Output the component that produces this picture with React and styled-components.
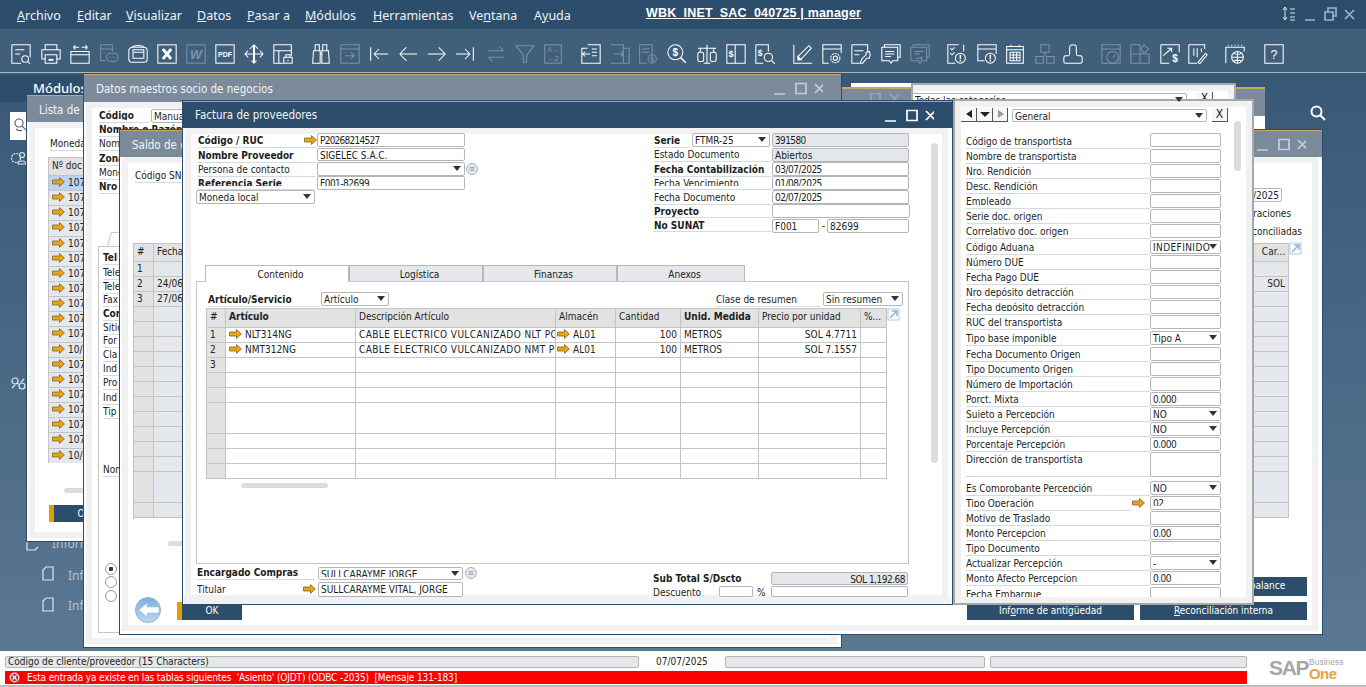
import React from 'react';
import styled, { createGlobalStyle, css } from 'styled-components';

const Global = createGlobalStyle`
  html,body{margin:0;padding:0;background:#fff;overflow:hidden;}
  #root{width:1366px;height:687px;}
`;
const FONT = `"DejaVu Sans Condensed","DejaVu Sans","Liberation Sans",sans-serif`;
const at = css`
  position:absolute;
  left:${p=>p.$x}px;top:${p=>p.$y}px;
  ${p=>p.$w!==undefined&&`width:${p.$w}px;`}
  ${p=>p.$h!==undefined&&`height:${p.$h}px;`}
`;
const clipped = css`
  ${p=>p.$clip&&`&::after{content:"";position:absolute;left:0;right:0;bottom:0;height:${p.$cut||3}px;background:#fff;}`}
`;
const Stage = styled.div`position:relative;width:1366px;height:687px;overflow:hidden;font-family:${FONT};font-size:10px;color:#222;background:#fff;`;
const MenuBar = styled.div`position:absolute;left:0;top:0;width:1366px;height:29px;background:#2d4d6d;`;
const MenuItem = styled.span`${at};top:7px;font:12.5px "Noto Sans",sans-serif;color:#eef2f6;white-space:nowrap;`;
const AppTitle = styled.span`position:absolute;left:646px;top:6px;font:bold 12.5px "Liberation Sans",sans-serif;letter-spacing:.18px;color:#fff;text-decoration:underline;white-space:nowrap;`;
const Toolbar = styled.div`position:absolute;left:0;top:29px;width:1366px;height:44px;background:#3f5f7b;border-bottom:1px solid #a9b8c6;box-sizing:border-box;`;
const ToolIcon = styled.svg`${at};width:20px;height:20px;fill:none;stroke:#fff;stroke-width:1.25;color:#fff;opacity:${p=>p.$dim?.32:1};`;
const WinBtnIcon = styled.svg`${at};width:14px;height:16px;fill:none;`;
const Desktop = styled.div`position:absolute;left:0;top:73px;width:1366px;height:578px;background:linear-gradient(180deg,#385877,#5a7892);`;
const ModHead = styled.div`position:absolute;left:0;top:75px;width:83px;height:27px;background:#2d4d6d;`;
const ModTitle = styled.span`position:absolute;left:33px;top:79px;font:500 13px "Noto Sans",sans-serif;color:#fff;`;
const Win = styled.div`${at};overflow:hidden;background:#fff;box-sizing:border-box;border:1px solid #2d4d6d;${p=>p.$plain&&`border-color:#a8a8a8;border-width:2px;`}`;
const Layer = styled.div`position:absolute;left:${p=>-p.$x}px;top:${p=>-p.$y}px;width:1366px;height:687px;`;
const Band = styled.div`${at};box-sizing:border-box;border:6px solid #f1f1f1;`;
const TitleBar = styled.div`${at};box-sizing:border-box;background:${p=>p.$active?'#2d4d6d':'#7b8b9b'};border-top:2px solid ${p=>p.$active?'#e09f00':'#c9a859'};`;
const TitleText = styled.span`${at};font:11.5px "DejaVu Sans Condensed","DejaVu Sans",sans-serif;color:#f2f4f6;white-space:nowrap;`;
const Ctl = styled.svg`${at};width:${p=>p.$cw||50}px;height:14px;fill:none;stroke:${p=>p.$c||'#fff'};stroke-width:1.7;`;
const Lbl = styled.div`${at};box-sizing:border-box;height:${p=>p.$h||15}px;line-height:15px;overflow:hidden;white-space:nowrap;font-weight:${p=>p.$b?'bold':'normal'};color:#1d1d1d;border-bottom:${p=>p.$line===false?'none':'1px solid #d3dae0'};${clipped}`;
const Field = styled.div`${at};box-sizing:border-box;height:${p=>p.$h||14}px;border:1px solid #b5b5b5;border-radius:2px;line-height:13px;padding:0 2px;overflow:hidden;white-space:nowrap;letter-spacing:${p=>p.$ls||0}px;text-align:${p=>p.$right?'right':'left'};background:${p=>p.$gray?'#e4e8ec':'#fff'};color:#1d1d1d;${clipped}`;
const Caret = styled.i`position:absolute;right:3px;top:3px;width:0;height:0;border-left:4px solid transparent;border-right:4px solid transparent;border-top:5px solid #333;z-index:1;`;
const TabBtn = styled.div`${at};box-sizing:border-box;height:17px;top:265px;text-align:center;line-height:17px;padding-left:7px;font-size:10px;border:1px solid #b8b8b8;background:${p=>p.$on?'#fff':'#e4e8ec'};${p=>p.$on&&'border-bottom:none;z-index:2;'}`;
const Panel = styled.div`${at};box-sizing:border-box;border:1px solid #c6c6c6;background:#fff;`;
const Scroll = styled.div`${at};background:#dcdcdc;border-radius:4px;`;
const Grid = styled.div`${at};display:grid;grid-template-columns:${p=>p.$cols};grid-template-rows:${p=>p.$rows};overflow:hidden;box-sizing:border-box;border-left:1px solid #c4c4c4;border-top:1px solid #c4c4c4;`;
const Cell = styled.div`position:relative;box-sizing:border-box;border-right:1px solid #c4c4c4;border-bottom:1px solid #c4c4c4;line-height:14px;padding:0 3px;white-space:nowrap;overflow:hidden;text-align:${p=>p.$right?'right':'left'};
  font-weight:${p=>p.$b?'bold':'normal'};
  letter-spacing:${p=>p.$ls||0}px;
  background:${p=>p.$bg||'#fff'};
  ${p=>p.$hi&&'line-height:16px;'}
`;
const ArrowSvg = styled.svg`${at};width:13px;height:10px;`;
const CellArrow = styled.svg`width:13px;height:10px;vertical-align:-1px;margin-right:3px;margin-left:${p=>p.$ml||0}px;`;
const DarkBtn = styled.div`${at};background:#2d4d6d;color:#fff;text-align:center;font-size:10px;line-height:17px;white-space:nowrap;`;
const GoldTab = styled.div`${at};background:#e09f00;`;
const Radio = styled.div`${at};width:12px;height:12px;box-sizing:border-box;border:1px solid #999;border-radius:50%;background:${p=>p.$on?'radial-gradient(circle,#333 0 2px,#fff 2.5px)':'#fff'};`;
const SideText = styled.span`${at};font:12px "Noto Sans",sans-serif;color:#b6c5d2;white-space:nowrap;`;
const SideIcon = styled.svg`${at};fill:none;stroke:${p=>p.$c||'#dfe6ec'};stroke-width:1.2;`;
const WhiteBox = styled.div`${at};background:#fff;`;
const Status = styled.div`position:absolute;left:0;top:651px;width:1366px;height:36px;background:#fff;border-bottom:2px solid #bdbdbd;box-sizing:border-box;`;
const StatusField = styled.div`${at};box-sizing:border-box;height:12px;top:656px;line-height:10px;font-size:10px;padding-left:2px;background:#e4e8ec;border:1px solid #b5b5b5;border-radius:2px;white-space:nowrap;overflow:hidden;`;
const StatusDate = styled.span`position:absolute;left:656px;top:656px;font-size:10px;line-height:12px;`;
const ErrorBar = styled.div`position:absolute;left:5px;top:671px;width:1242px;height:13px;background:#ff0000;color:#fff;font-size:10px;line-height:13px;padding-left:22px;box-sizing:border-box;white-space:pre;letter-spacing:-.12px;`;
const ErrIcon = styled.svg`position:absolute;left:4px;top:1px;width:11px;height:11px;`;
const LogoSap = styled.span`position:absolute;left:1269px;top:656px;font:bold 21px "Liberation Sans",sans-serif;letter-spacing:-1.3px;color:#a6a6a6;`;
const LogoBiz = styled.span`position:absolute;left:1309px;top:657px;font:8.5px "Liberation Sans",sans-serif;color:#a6a6a6;`;
const LogoOne = styled.span`position:absolute;left:1309px;top:665px;font:bold 15px "Liberation Sans",sans-serif;letter-spacing:-.6px;color:#e8a33d;`;
const PlainBtn = styled.div`${at};box-sizing:border-box;height:14px;background:#f6f6f6;border-right:1px solid #555;border-bottom:1px solid #555;text-align:center;line-height:12px;font-size:12px;color:#222;`;
const Tri = styled.i`position:absolute;top:2px;left:${p=>p.$l}px;width:0;height:0;border-top:4.5px solid transparent;border-bottom:4.5px solid transparent;${p=>p.$dir==='l'?`border-right:6px solid #222;`:`border-left:6px solid #999;`}`;
const TriDown = styled.i`position:absolute;top:4px;left:3px;width:0;height:0;border-left:5px solid transparent;border-right:5px solid transparent;border-top:5px solid #222;`;
const Glob = styled.svg`${at};width:12px;height:12px;fill:#e4e8ec;stroke:#a8b4c0;`;
const Expand = styled.svg`${at};width:13px;height:13px;fill:none;stroke:#8fb1d8;`;
const Back = styled.svg`${at};width:28px;height:26px;`;
const Search = styled.svg`${at};fill:none;stroke:#fff;stroke-width:2;`;
const Corner = styled.div`${at};box-sizing:border-box;border-left:1px solid #c6c6c6;border-top:1px solid #c6c6c6;transform:skewX(-15deg);`;
const RightText = styled.span`float:right;`;
const Offset = styled.span`margin-left:${p=>p.$ml}px;`;

const Arrow = p => <ArrowSvg {...p} viewBox="0 0 13 10"><path d="M.5 3h7V.6L12.4 5 7.5 9.4V7h-7z" fill="#eaa416" stroke="#7d6526" strokeWidth=".8"/></ArrowSvg>;
const InArrow = p => <CellArrow {...p} viewBox="0 0 13 10"><path d="M.5 3h7V.6L12.4 5 7.5 9.4V7h-7z" fill="#eaa416" stroke="#7d6526" strokeWidth=".8"/></CellArrow>;
const Glyph = ({x=12,y=15,s=8,b=true,i,f='Liberation Sans',children})=><text x={x} y={y} fontSize={s} fontWeight={b?'bold':'normal'} fontStyle={i?'italic':'normal'} fill="#fff" stroke="none" textAnchor="middle" fontFamily={f}>{children}</text>;

const icons = {
 docSearch:<><path d="M1 1h22v15M1 1v22h11M5 7h11M5 12h6"/><circle cx="17" cy="18" r="4"/><path d="M20 21l3 3"/></>,
 printer:<><path d="M5 7V1h14v6M5 18H1V7h22v11h-4"/><path d="M5 13h14v10H5z"/><path d="M9 19h6" strokeWidth="2.2"/></>,
 transfer:<><path d="M1 9h22v14H1zM1 13h22M4 4h7M4 4l2.500-2.500M4 4l2.500 2.500M14 4h7M21 4l-2.500-2.500M21 4l-2.500 2.500"/></>,
 chat:<><path d="M2 1h14v8M2 1v19h6M2 6h14"/><rect x="9" y="11" width="14" height="10" rx="5"/><path d="M12.500 16h1M15.500 16h1M18.500 16h1" strokeWidth="1.6"/></>,
 winbox:<><path d="M5 4C6 1 18 1 19 4"/><rect x="1" y="4" width="22" height="18" rx="4"/><path d="M6 7h13v10H6zM6 10h13"/></>,
 excel:<><rect x="1" y="1" width="22" height="22"/><path d="M7 6l10 12M17 6L7 18" strokeWidth="3.4"/></>,
 word:<><rect x="1" y="1" width="22" height="22"/><Glyph y={18} s={15} i f="Liberation Sans">W</Glyph></>,
 pdf:<><rect x="1" y="1" width="22" height="22"/><Glyph y={15} s={8.500}>PDF</Glyph></>,
 move:<><path d="M12 1v22" strokeWidth="2.500"/><path d="M1 12h22M12 1L7 6M12 1l5 5M12 23l-3-3M12 23l3-3M1 12l4-4M1 12l4 4M23 12l-4-4M23 12l-4 4"/></>,
 lock:<><path d="M1 1h21v7H1zM1 8v15h6V8M7 23h5M22 8v6"/><rect x="13" y="16" width="10" height="7"/><path d="M15.500 16v-3h5v3"/><path d="M18 19v1.500" strokeWidth="1.600"/></>,
 bino:<><path d="M5 1h5v7H5zM14 1h5v7h-5zM3 8h8v15H2zM13 8h8l1 15h-9zM11 12h2"/></>,
 inbox:<><path d="M1 1h22v22H1zM1 6h22M6 14h11M13 10l4 4-4 4"/></>,
 first:<path d="M2 4v16M23 12H6M6 12l6-6M6 12l6 6"/>,
 prev:<path d="M23 12H2M2 12l8-8M2 12l8 8"/>,
 next:<path d="M1 12h21M22 12l-8-8M22 12l-8 8"/>,
 last:<path d="M22 4v16M1 12h17M18 12l-6-6M18 12l-6 6"/>,
 swap:<path d="M3 8h18M21 8l-5-5M21 16H3M3 16l5 5"/>,
 funnel:<path d="M1 2h22l-9 11v9h-4v-9z"/>,
 az:<><rect x="2" y="1" width="20" height="22"/><Glyph y={10} s={8} b={false}>A→</Glyph><Glyph y={20} s={8} b={false}>←Z</Glyph></>,
 docOut:<><path d="M8 1h15v22H8M1 5h7M1 5v18h7M13 6h6M13 10h6M13 14h6M2 12h9M2 12l3-3M2 12l3 3"/></>,
 docIn:<><path d="M1 1h15v22H1M16 5h7v18h-7M5 12h11M16 12l-3-3M16 12l-3 3"/></>,
 cash:<><path d="M2 1h15v15M2 1v22h9M5 6h9M5 10h9"/><circle cx="17" cy="18" r="5"/><Glyph x={17} y={21} s={8}>$</Glyph></>,
 dollarSearch:<><circle cx="10" cy="10" r="9"/><Glyph x={10} y={14.500} s={12}>$</Glyph><path d="M16.500 16.500l6 6" strokeWidth="2"/></>,
 scale:<><path d="M12 1v4M1 5h22M4 5v5M20 5v5"/><rect x="1" y="10" width="7" height="11" rx="2"/><rect x="16" y="10" width="7" height="11" rx="2"/><path d="M12 5v18M8 23h8"/></>,
 dollarCol:<><path d="M1 1h22v22H1zM11 1v22"/><Glyph x={6} y={16} s={11}>$</Glyph></>,
 dollarDoc:<><path d="M1 1h15v8M1 1v22h9M16 1h-2"/><Glyph x={6} y={14} s={10}>$</Glyph><circle cx="16" cy="16" r="5"/><path d="M20 20l4 4"/></>,
 pencil:<><path d="M1 1v22h22"/><path d="M6 19v-4L19 2l3 3L9 19z"/><path d="M6 19v-4l4 4z" fill="#fff"/></>,
 gear:<><path d="M1 1h22v5H1zM1 6v17h7M23 6v5"/><circle cx="16" cy="17" r="5.500" strokeDasharray="2.500 1"/><circle cx="16" cy="17" r="2.500"/></>,
 docTool:<><path d="M1 1h19v9M1 1v22h9M4 8h11M4 13h6"/><path d="M22 9l-4 1v3l-5 5-2 5h3l5-6h3l1-4z"/></>,
 comment:<><path d="M4 4V1h19v15h-3M1 4h19v16h-6l-2 3-2-3H1zM5 9h11M5 12h11M5 15h7" /></>,
 commentIn:<><path d="M4 4V1h19v15h-3M1 4h19v16h-6l-2 3-2-3H1zM5 9h11M5 12h7M7 17h8M15 17l-2-2M15 17l-2 2"/></>,
 checkAlert:<><path d="M14 1H1v22h9M20 1v8M4 5l2 2 3-3M4 11l2 2 3-3"/><circle cx="16" cy="17" r="6"/><path d="M16 13v5M16 19v2" strokeWidth="1.800"/></>,
 winAlert:<><path d="M1 1h22v5H1zM1 6v14h8M23 6v6"/><circle cx="16" cy="17" r="6"/><path d="M16 13v5M16 19v2" strokeWidth="1.800"/></>,
 calc:<><path d="M2 3h20v20H2zM7 1v3M17 1v3M2 7h20"/><path d="M6 10h12v10H6zM6 13.300h12M6 16.600h12M10 10v10M14 10v10"/></>,
 hier:<><path d="M7 1h10v9H7zM1 15h9v8H1zM14 15h9v8h-9zM12 10v5"/></>,
 user:<><path d="M8 10V4c0-4 8-4 8 0v6c0 3 0 4 2 4h3c2 0 2 2 2 3v4c0 1-1 2-2 2H3c-1 0-2-1-2-2v-4c0-1 0-3 2-3h3c2 0 2-1 2-4z"/></>,
 clockWin:<><path d="M1 1h22v22H1zM1 6h22"/><circle cx="14" cy="16" r="7"/><path d="M14 16l3-3"/></>,
 blocks:<><path d="M1 1h11v11H1zM1 12h11v11H1zM12 12h11v11H12z"/><path d="M17 1l5 5-5 5-4-5z"/></>,
 growth:<><path d="M1 1h22v9M1 1v22h10M4 14l9-8M9 5h5v5"/><Glyph x={18} y={22} s={12}>$</Glyph></>,
 chartPen:<><path d="M1 1h19v5M1 1v22h10M7 5v9M11 5v11M16 5v5M12 22l9-11 2 2-9 11z"/></>,
 calGlobe:<><path d="M1 23V4h22v5M4 1v1M8 1v1M12 1v1M16 1v1M20 1v1"/><circle cx="15" cy="16" r="7"/><path d="M8 16h14M15 9v14M10 11c3 2 7 2 10 0M10 21c3-2 7-2 10 0"/></>,
 help:<><path d="M1 1h22v22H1z"/><Glyph y={18} s={15} b={false}>?</Glyph></>,
};
const toolbar = [[11,'docSearch'],[41,'printer'],[70,'transfer'],[99,'chat',1],[128,'winbox'],[157,'excel'],[186,'word',1],[215,'pdf'],[244,'move'],[273,'lock'],[311,'bino'],[340,'inbox',1],[369,'first'],[398,'prev'],[427,'next'],[455,'last'],[486,'swap',1],[515,'funnel',1],[543,'az',1],[581,'docOut'],[610,'docIn',1],[638,'cash',1],[667,'dollarSearch'],[697,'scale'],[726,'dollarCol'],[755,'dollarDoc'],[793,'pencil'],[822,'gear'],[851,'docTool'],[881,'comment'],[910,'commentIn',1],[947,'checkAlert'],[977,'winAlert'],[1005,'calc'],[1035,'hier',1],[1063,'user'],[1101,'clockWin',1],[1130,'blocks',1],[1160,'growth'],[1188,'chartPen'],[1225,'calGlobe'],[1264,'help']];
const menu = [[17,'A','rchivo'],[77,'E','ditar'],[126,'V','isualizar'],[197,'D','atos'],[247,'P','asar a'],[305,'M','ódulos'],[373,'H','erramientas']];

const Controls = ({x,y,c}) => <Ctl $x={x} $y={y} $c={c} viewBox="0 0 50 14"><path d="M1 12h11M23 1.500h10v10H23zM42 2l9 9M51 2l-9 9"/></Ctl>;
const Window = ({x,y,w,h,title,titleH=28,active,textY,ctlX,children}) => (
  <Win $x={x} $y={y} $w={w} $h={h}>
    <Layer $x={x+1} $y={y+1}>
      <Band $x={x+3} $y={y+titleH} $w={w-8} $h={h-titleH-4}/>
      {children}
      <TitleBar $x={x+1} $y={y} $w={w-2} $h={titleH} $active={active}/>
      <TitleText $x={x+13} $y={y+(textY||9)}>{title}</TitleText>
      {ctlX && <Controls x={ctlX} y={y+9} c={active?'#fff':'#c4ced8'}/>}
    </Layer>
  </Win>
);

const Select = ({children,...p}) => <Field {...p}>{children}<Caret/></Field>;

const genRows = [
 ['Código de transportista',133,'',0,0,0,0,1],['Nombre de transportista',149],['Nro. Rendición',164],['Desc. Rendición',179],['Empleado',194,'',1],['Serie doc. origen',209],['Correlativo doc. origen',224],['Código Aduana',240,'INDEFINIDO',0,1],['Número DUE',255],['Fecha Pago DUE',270],['Nro depósito detracción',285],['Fecha depósito detracción',300,'',1],['RUC del transportista',315],['Tipo base imponible',331,'Tipo A',0,1],['Fecha Documento Origen',347],['Tipo Documento Origen',362],['Número de Importación',377],['Porct. Mixta',392,'0.000'],['Sujeto a Percepción',407,'NO',1,1],['Incluye Percepción',422,'NO',0,1],['Porcentaje Percepción',437,'0.000'],['Dirección de transportista',452,'',0,0,25],['Es Comprobante Percepción',481,'NO',1,1],['Tipo Operación',496,'02',1,0,0,1],['Motivo de Traslado',511],['Monto Percepcion',526,'0.00'],['Tipo Documento',541],['Actualizar Percepción',556,'-',0,1],['Monto Afecto Percepcion',571,'0.00'],['Fecha Embarque',587,'',1,0,11],
];
const cols = '19px 130px 200px 60px 65px 78px 102px 26px';
const gridHead = ['#','Artículo','Descripción Artículo','Almacén','Cantidad','Unid. Medida','Precio por unidad','%...'];
const blank = n => Array.from({length:n},(_,i)=>i);

export default function App(){
  return (
  <Stage>
    <Global/>
    <MenuBar>
      {menu.map(([x,u,r])=><MenuItem key={x} $x={x}><u>{u}</u>{r}</MenuItem>)}
      <MenuItem $x={469}>Ve<u>n</u>tana</MenuItem>
      <MenuItem $x={534}>A<u>y</u>uda</MenuItem>
      <AppTitle>WBK_INET_SAC_040725 | manager</AppTitle>
      <WinBtnIcon $x={1282} $y={6} viewBox="0 0 14 16"><path d="M3 1v13M3 1L1 4M3 1l2 3M3 14l-2-3M3 14l2-3M8 3h5M8 7h5M8 11h5M8 14h5" stroke="#dfe6ec"/></WinBtnIcon>
      <Ctl $cw={54} $x={1304} $y={7} $c="#9db0c2" viewBox="0 0 54 14"><path d="M1 13h10M21 5h8v8h-8zM24 5V1h8v8h-3M41 3l9 9M50 3l-9 9"/></Ctl>
    </MenuBar>
    <Toolbar>
      {toolbar.map(([x,n,d])=><ToolIcon key={x} $x={x} $y={15} $dim={d} viewBox="0 0 24 24">{icons[n]}</ToolIcon>)}
    </Toolbar>
    <Desktop/>
    <ModHead/><ModTitle>Módulos</ModTitle>
    <SideIcon $x={10} $y={150} width="17" height="16" viewBox="0 0 17 16"><circle cx="6" cy="8" r="4.500" strokeDasharray="2 1"/><circle cx="12" cy="5" r="2.500"/><path d="M8 14c0-4 8-4 8 0z"/></SideIcon>
    <SideIcon $x={10} $y={375} width="17" height="17" viewBox="0 0 17 17"><circle cx="5" cy="6" r="3"/><circle cx="12" cy="11" r="3"/><path d="M7 8l3 2M2 13l3-3M14 4l-3 3"/></SideIcon>
    <SideText $x={52} $y={535}>Inform</SideText>
    <SideIcon $x={26} $y={537} width="14" height="14" viewBox="0 0 14 14"><path d="M1 1v12h8l3-3"/></SideIcon>
    <SideIcon $x={42} $y={566} width="12" height="15" viewBox="0 0 12 15"><path d="M4 1h7v13H1V4z"/></SideIcon>
    <SideIcon $x={42} $y={597} width="12" height="15" viewBox="0 0 12 15"><path d="M4 1h7v13H1V4z"/></SideIcon>
    <SideText $x={68} $y={567}>Inf</SideText>
    <SideText $x={68} $y={597}>Inf</SideText>
    <WhiteBox $x={10} $y={112} $w={16} $h={28}/>
    <SideIcon $c="#666" $x={13} $y={117} width="13" height="16" viewBox="0 0 13 16"><circle cx="6" cy="6" r="4"/><path d="M9 9l4 4M3 12c2 2 5 2 6 1"/></SideIcon>

    {/* Lista de window */}
    <Window x={26} y={94} w={200} h={448} title="Lista de" >
      <Lbl $x={50} $y={136} $w={33}>Moneda</Lbl>
      <Grid $x={48} $y={157} $w={100} $h={306} $cols="100px" $rows="18px repeat(19,15.15px)">
        <Cell $bg="#e2e2e2" $hi>Nº doc</Cell>
        {blank(19).map(i=><Cell key={i} $bg={i===0?'#b9d5f3':'#e4e8ec'}><InArrow/>{i===11||i===18?'10/4':'107'}</Cell>)}
      </Grid>
      <Scroll $x={64} $y={488} $w={40} $h={5}/>
      <GoldTab $x={49} $y={505} $w={6} $h={17}/>
      <DarkBtn $x={54} $y={505} $w={60} $h={17}>OK</DarkBtn>
    </Window>

    {/* behind right title */}
    <TitleBar $x={842} $y={87} $w={423} $h={29}/>
    <WhiteBox $x={1235} $y={116} $w={30} $h={20}/>
    <WhiteBox $x={851} $y={83} $w={60} $h={4}/>
    <Ctl $x={866} $y={92} $c="#96a5b4" viewBox="0 0 50 14"><path d="M5 1.500h9v10H5zM24 2l9 9M33 2l-9 9"/></Ctl>
    <Win $plain $x={911} $y={83} $w={325} $h={60}>
      <Layer $x={913} $y={85}>
        <Band $x={913} $y={85} $w={321} $h={60}/>
        <Select $x={912} $y={93} $w={275} $h={12}>Todas las categorías</Select>
        <PlainBtn $x={1197} $y={92} $w={16}>X</PlainBtn>
      </Layer>
    </Win>

    {/* Datos maestros */}
    <Window x={83} y={73} w={759} h={575} title="Datos maestros socio de negocios" titleH={29} ctlX={773}>
      <Lbl $b $x={99} $y={108} $w={50} $clip $cut={2}>Código</Lbl>
      <Field $x={151} $y={109} $w={60}>Manual</Field>
      {[['Nombre o Razón',122,1],['Nombre',136],['Zona',151,1],['Moneda',165],['Nro',179,1]].map(([t,y,b])=><Lbl key={y} $x={99} $y={y} $w={84} $b={b}>{t}</Lbl>)}
      <Corner $x={109} $y={232} $w={20} $h={14}/>
      <Panel $x={98} $y={246} $w={100} $h={387}/>
      {[['Tel',250,1],['Tele',265],['Tele',279],['Fax',292],['Cor',306,1],['Sitio',320],['For',333],['Cla',347],['Ind',361],['Pro',375],['Ind',390],['Tip',404]].map(([t,y,b])=><Lbl key={y} $x={103} $y={y} $w={30} $b={b}>{t}</Lbl>)}
      <Lbl $x={103} $y={462} $w={30}>Nombre</Lbl>
      <Radio $x={105} $y={563} $on/><Radio $x={105} $y={576}/><Radio $x={105} $y={590}/>
    </Window>

    {/* Saldo */}
    <Window x={119} y={129} w={1204} h={506} title="Saldo de cuenta" ctlX={1256}>
      <Lbl $x={135} $y={168} $w={60}>Código SN</Lbl>
      <Grid $x={133} $y={243} $w={60} $h={276} $cols="20px 40px" $rows="18px repeat(14,15px) 31px 15px">
        <Cell $bg="#e2e2e2" $hi>#</Cell><Cell $bg="#e2e2e2" $hi>Fecha</Cell>
        <Cell $bg="#e2e2e2">1</Cell><Cell $bg="#e4e8ec"/>
        <Cell $bg="#e2e2e2">2</Cell><Cell $bg="#e4e8ec">24/06/2025</Cell>
        <Cell $bg="#e2e2e2">3</Cell><Cell $bg="#e4e8ec">27/06/2025</Cell>
        {blank(13).map(i=><React.Fragment key={i}><Cell $bg="#e2e2e2"/><Cell $bg="#e4e8ec"/></React.Fragment>)}
      </Grid>
      <Scroll $x={168} $y={541} $w={30} $h={5}/>
      <Back $x={134} $y={597} viewBox="0 0 28 26">
        <defs><linearGradient id="bk" x1="0" y1="0" x2="0" y2="1"><stop offset="0" stopColor="#7eb0dc"/><stop offset="1" stopColor="#bcd6ee"/></linearGradient></defs>
        <circle cx="14" cy="13" r="12.500" fill="url(#bk)" stroke="#8eb2d4"/>
        <path d="M5 13l8-7v4h12v6H13v4z" fill="#fff" stroke="#9bbcdc" strokeWidth=".6"/>
      </Back>
      <GoldTab $x={177} $y={602} $w={6} $h={18}/>
      <DarkBtn $x={182} $y={602} $w={60} $h={18}>OK</DarkBtn>
      <Field $x={1240} $y={188} $w={42}><RightText>/2025</RightText></Field>
      <Lbl $x={1253} $y={206} $w={50} $line={false}>raciones</Lbl>
      <Lbl $x={1252} $y={224} $w={55} $line={false}>conciliadas</Lbl>
      <Grid $x={1240} $y={243} $w={49} $h={276} $cols="48px" $rows="18px repeat(14,15px) 31px 15px">
        <Cell $bg="#e2e2e2" $right $hi>Car...</Cell>
        {blank(16).map(i=><Cell key={i} $bg="#e4e8ec" $right>{i===1?'SOL':''}</Cell>)}
      </Grid>
      <Expand $x={1289} $y={242} viewBox="0 0 13 13"><path d="M1 1h11v11H1z" strokeWidth=".7"/><path d="M3 10l7-7M5 3h5v5" strokeWidth="1.500"/></Expand>
      <DarkBtn $x={1140} $y={577} $w={167} $h={19}><Offset $ml={18}>Vista previa de balance</Offset></DarkBtn>
      <DarkBtn $x={967} $y={602} $w={167} $h={18}>Inf<u>o</u>rme de antigüedad</DarkBtn>
      <DarkBtn $x={1140} $y={602} $w={167} $h={18}><u>R</u>econciliación interna</DarkBtn>
    </Window>

    {/* Factura */}
    <Window x={182} y={100} w={771} h={505} title="Factura de proveedores" active textY={8} ctlX={884}>
      <Lbl $b $x={198} $y={133} $w={118}>Código / RUC</Lbl>
      <Arrow $x={304} $y={135}/>
      <Field $ls={-.75} $x={317} $y={133} $w={148}>P20268214527</Field>
      <Lbl $b $x={198} $y={148} $w={118}>Nombre Proveedor</Lbl>
      <Field $x={317} $y={148} $w={148} $h={13}>SIGELEC S.A.C.</Field>
      <Lbl $clip $cut={2} $x={198} $y={162} $w={118}>Persona de contacto</Lbl>
      <Select $x={317} $y={162} $w={148}/>
      <Glob $x={466} $y={163} viewBox="0 0 12 12"><circle cx="6" cy="6" r="5.500"/><path d="M3.500 4.800h5M3.500 7.200h5" stroke="#8a96a2"/></Glob>
      <Lbl $b $clip $x={198} $y={176} $w={118} $h={14}>Referencia Serie</Lbl>
      <Field $clip $ls={-.5} $x={317} $y={176} $w={148}>F001-82699</Field>
      <Select $x={196} $y={190} $w={119}>Moneda local</Select>

      <Lbl $b $x={654} $y={133} $w={36}>Serie</Lbl>
      <Select $x={692} $y={133} $w={78}>FTMR-25</Select>
      <Field $ls={-.6} $gray $x={772} $y={133} $w={137}>391580</Field>
      <Lbl $x={654} $y={147} $w={117}>Estado Documento</Lbl>
      <Field $gray $x={772} $y={148} $w={137}>Abiertos</Field>
      <Lbl $b $x={654} $y={162} $w={117}>Fecha Contabilización</Lbl>
      <Field $ls={-.5} $x={772} $y={162} $w={137}>03/07/2025</Field>
      <Lbl $clip $x={654} $y={176} $w={117} $h={14}>Fecha Vencimiento</Lbl>
      <Field $clip $ls={-.5} $x={772} $y={176} $w={137}>01/08/2025</Field>
      <Lbl $x={654} $y={190} $w={117} >Fecha Documento</Lbl>
      <Field $ls={-.5} $x={772} $y={190} $w={137}>02/07/2025</Field>
      <Lbl $b $x={654} $y={204} $w={117} $h={14}>Proyecto</Lbl>
      <Field $x={772} $y={204} $w={138}/>
      <Lbl $b $x={654} $y={218} $w={117} $h={14}>No SUNAT</Lbl>
      <Field $x={772} $y={219} $w={47}>F001</Field>
      <Lbl $x={822} $y={218} $w={5} $line={false}>-</Lbl>
      <Field $x={827} $y={219} $w={82}>82699</Field>

      <TabBtn $on $x={205} $w={144}>Contenido</TabBtn>
      <TabBtn $x={349} $w={134}>Logística</TabBtn>
      <TabBtn $x={483} $w={134}>Finanzas</TabBtn>
      <TabBtn $x={617} $w={128}>Anexos</TabBtn>
      <Panel $x={196} $y={281} $w={713} $h={283}/>
      <Lbl $b $x={208} $y={292} $w={112}>Artículo/Servicio</Lbl>
      <Select $x={321} $y={292} $w={68}>Artículo</Select>
      <Lbl $x={716} $y={292} $w={105}>Clase de resumen</Lbl>
      <Select $x={823} $y={292} $w={80}>Sin resumen</Select>
      <Grid $x={206} $y={308} $w={681} $h={171} $cols={cols} $rows="19px repeat(5,15px) 31px repeat(3,15px)">
        {gridHead.map((t,i)=><Cell key={t} $bg="#e2e2e2" $hi $b={i===1||i===5}>{t}</Cell>)}
        <Cell $bg="#e2e2e2">1</Cell><Cell><InArrow/>NLT314NG</Cell><Cell $ls={.4}>CABLE ELECTRICO VULCANIZADO NLT POLIETILENO</Cell><Cell><InArrow $ml={-2}/>AL01</Cell><Cell $right>100</Cell><Cell>METROS</Cell><Cell $right>SOL 4.7711</Cell><Cell/>
        <Cell $bg="#e2e2e2">2</Cell><Cell><InArrow/>NMT312NG</Cell><Cell $ls={.4}>CABLE ELECTRICO VULCANIZADO NMT POLIETILENO</Cell><Cell><InArrow $ml={-2}/>AL01</Cell><Cell $right>100</Cell><Cell>METROS</Cell><Cell $right>SOL 7.1557</Cell><Cell/>
        <Cell $bg="#e2e2e2">3</Cell>{blank(7).map(i=><Cell key={i}/>)}
        {blank(6).flatMap(r=>[<Cell key={r+'a'} $bg="#e2e2e2"/>,...blank(7).map(i=><Cell key={r+'-'+i}/>)])}
      </Grid>
      <Expand $x={887} $y={308} viewBox="0 0 13 13"><path d="M1 1h11v11H1z" strokeWidth=".7"/><path d="M3 10l7-7M5 3h5v5" strokeWidth="1.500"/></Expand>
      <Scroll $x={241} $y={483} $w={87} $h={5}/>
      <Scroll $x={931} $y={143} $w={7} $h={320}/>

      <Lbl $b $x={197} $y={565} $w={118}>Encargado Compras</Lbl>
      <Select $clip $cut={2} $x={318} $y={567} $w={145} $h={13}>SULLCARAYME JORGE</Select>
      <Glob $x={465} $y={567} viewBox="0 0 12 12"><circle cx="6" cy="6" r="5.500"/><path d="M3.500 4.800h5M3.500 7.200h5" stroke="#8a96a2"/></Glob>
      <Lbl $x={197} $y={582} $w={100} $line={false}>Titular</Lbl>
      <Arrow $x={303} $y={584}/>
      <Field $x={318} $y={582} $w={145} $h={15}>SULLCARAYME  VITAL, JORGE</Field>
      <Lbl $b $x={653} $y={571} $w={115} $line={false}>Sub Total S/Dscto</Lbl>
      <Field $ls={-.5} $gray $right $x={771} $y={572} $w={137} $h={13}>SOL 1,192.68</Field>
      <Lbl $x={653} $y={585} $w={60} $h={12} $line={false}>Descuento</Lbl>
      <Field $x={719} $y={586} $w={34} $h={11}/>
      <Lbl $x={757} $y={585} $w={12} $h={12} $line={false}>%</Lbl>
      <Field $x={771} $y={586} $w={137} $h={11}/>
      <Band $x={183} $y={597} $w={768} $h={6}/>
    </Window>

    {/* General side form */}
    <Win $plain $x={953} $y={99} $w={301} $h={506}>
      <Layer $x={955} $y={101}>
        {genRows.map(([t,y,v,clip,sel,tall,arrow,first])=><React.Fragment key={t}>
          <Lbl $x={966} $y={y+(first?1:0)} $w={arrow?165:184} $clip={clip} $h={tall===25?25:15} $line={t!=='Fecha Embarque'}>{t}</Lbl>
          {sel
            ? <Select $x={1150} $y={y} $w={71} $h={14} $ls={v==='INDEFINIDO'?.4:0}>{v}</Select>
            : <Field $x={1150} $y={y} $w={71} $h={tall||14} $ls={-.5} $clip={clip&&v}>{v}</Field>}
          {arrow&&<Arrow $x={1132} $y={y+2}/>}
        </React.Fragment>)}
        <Band $x={955} $y={101} $w={297} $h={502}/>
        <WhiteBox $x={961} $y={107} $w={285} $h={20}/>
        <PlainBtn $x={961} $y={108} $w={16}><Tri $dir="l" $l={5}/></PlainBtn>
        <PlainBtn $x={977} $y={108} $w={16}><TriDown/></PlainBtn>
        <PlainBtn $x={993} $y={108} $w={15}><Tri $dir="r" $l={5}/></PlainBtn>
        <Select $x={1012} $y={109} $w={195} $h={13}>General</Select>
        <PlainBtn $x={1212} $y={108} $w={16}>X</PlainBtn>
        <Scroll $x={1234} $y={121} $w={7} $h={50}/>
      </Layer>
    </Win>

    <Search $x={1309} $y={104} width="18" height="18" viewBox="0 0 18 18"><circle cx="7.500" cy="7.500" r="5"/><path d="M11 11l5 5"/></Search>

    <Status/>
    <StatusField $x={5} $w={634}>Código de cliente/proveedor (15 Characters)</StatusField>
    <StatusDate>07/07/2025</StatusDate>
    <StatusField $x={725} $w={260}/>
    <StatusField $x={990} $w={257}/>
    <ErrorBar>
      <ErrIcon viewBox="0 0 11 11"><circle cx="5.500" cy="5.500" r="5" fill="#d9d9d9"/><circle cx="5.500" cy="5.500" r="3.500" fill="#a33"/><path d="M3.500 3.500l4 4M7.500 3.500l-4 4" stroke="#fff" strokeWidth="1.200"/></ErrIcon>
      {"Esta entrada ya existe en las tablas siguientes  'Asiento' (OJDT) (ODBC -2035)  [Mensaje 131-183]"}
    </ErrorBar>
    <LogoSap>SAP</LogoSap><LogoBiz>Business</LogoBiz><LogoOne>One</LogoOne>
  </Stage>
  );
}
